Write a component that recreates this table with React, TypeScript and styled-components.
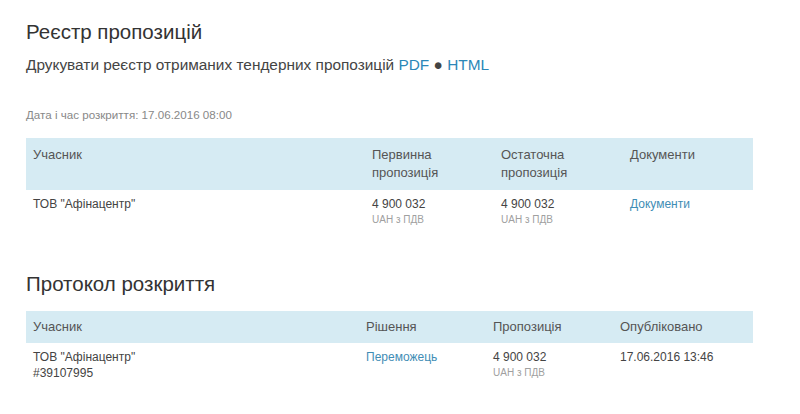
import React from "react";
import styled, { createGlobalStyle } from "styled-components";

const Global = createGlobalStyle`
  html, body { margin: 0; padding: 0; background: #ffffff; }
  body { font-family: "Liberation Sans", Arial, sans-serif; color: #444; }
`;

const Page = styled.div`
  padding: 17px 47px 0 26px;
  width: 727px;
`;

const Title = styled.h2<{ $top?: number }>`
  margin: ${(p) => p.$top ?? 0}px 0 0;
  font-size: 20.5px;
  line-height: 30px;
  font-weight: normal;
  color: #333;
`;

const Subtitle = styled.div`
  margin-top: 8px;
  font-size: 15.4px;
  line-height: 20px;
  color: #444;
`;

const Link = styled.a`
  color: #2b87b8;
  text-decoration: none;
`;

const DateLine = styled.div`
  margin-top: 33px;
  font-size: 11.6px;
  line-height: 14px;
  color: #888;
`;

const Table = styled.div<{ $cols: string; $top: number }>`
  margin-top: ${(p) => p.$top}px;
  display: grid;
  grid-template-columns: ${(p) => p.$cols};
`;

const Head = styled.div<{ $pad: number }>`
  background: #d6ebf3;
  padding: ${(p) => p.$pad}px 7px;
  font-size: 13px;
  line-height: 18px;
  color: #555;
`;

const Cell = styled.div`
  padding: 6px 7px;
  font-size: 12px;
  line-height: 16px;
  color: #444;
`;

const Sub = styled.div`
  font-size: 10px;
  line-height: 16px;
  color: #a0a0a0;
`;

const CellLink = styled.a`
  color: #3f8db5;
  text-decoration: none;
`;

export default function App() {
  return (
    <>
      <Global />
      <Page>
        <Title>Реєстр пропозицій</Title>
        <Subtitle>
          Друкувати реєстр отриманих тендерних пропозицій <Link href="#">PDF</Link> ● <Link href="#">HTML</Link>
        </Subtitle>
        <DateLine>Дата і час розкриття: 17.06.2016 08:00</DateLine>
        <Table $cols="339px 129px 129px 130px" $top={16}>
          <Head $pad={8}>Учасник</Head>
          <Head $pad={8}>Первинна<br />пропозиція</Head>
          <Head $pad={8}>Остаточна<br />пропозиція</Head>
          <Head $pad={8}>Документи</Head>
          <Cell>ТОВ "Афінацентр"</Cell>
          <Cell>
            4 900 032
            <Sub>UAH з ПДВ</Sub>
          </Cell>
          <Cell>
            4 900 032
            <Sub>UAH з ПДВ</Sub>
          </Cell>
          <Cell>
            <CellLink href="#">Документи</CellLink>
          </Cell>
        </Table>
        <Title $top={35}>Протокол розкриття</Title>
        <Table $cols="333px 127px 127px 140px" $top={12}>
          <Head $pad={7}>Учасник</Head>
          <Head $pad={7}>Рішення</Head>
          <Head $pad={7}>Пропозиція</Head>
          <Head $pad={7}>Опубліковано</Head>
          <Cell>
            ТОВ "Афінацентр"
            <br />
            #39107995
          </Cell>
          <Cell>
            <CellLink href="#">Переможець</CellLink>
          </Cell>
          <Cell>
            4 900 032
            <Sub>UAH з ПДВ</Sub>
          </Cell>
          <Cell>17.06.2016 13:46</Cell>
        </Table>
      </Page>
    </>
  );
}
